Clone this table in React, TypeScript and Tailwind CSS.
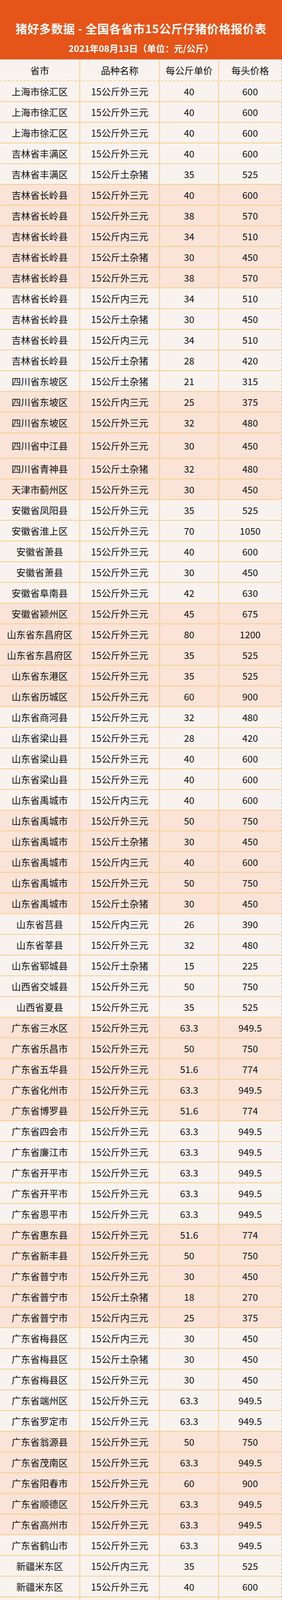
const ww = '15公斤外三元';
const nn = '15公斤内三元';
const tt = '15公斤土杂猪';

// 省市, 品种名称, 每公斤单价, 每头价格
const rows: [string, string, string, string][] = [
  ['上海市徐汇区', ww, '40', '600'],
  ['上海市徐汇区', ww, '40', '600'],
  ['上海市徐汇区', ww, '40', '600'],
  ['吉林省丰满区', ww, '40', '600'],
  ['吉林省丰满区', tt, '35', '525'],
  ['吉林省长岭县', ww, '40', '600'],
  ['吉林省长岭县', ww, '38', '570'],
  ['吉林省长岭县', nn, '34', '510'],
  ['吉林省长岭县', tt, '30', '450'],
  ['吉林省长岭县', ww, '38', '570'],
  ['吉林省长岭县', nn, '34', '510'],
  ['吉林省长岭县', tt, '30', '450'],
  ['吉林省长岭县', nn, '34', '510'],
  ['吉林省长岭县', tt, '28', '420'],
  ['四川省东坡区', tt, '21', '315'],
  ['四川省东坡区', nn, '25', '375'],
  ['四川省东坡区', ww, '32', '480'],
  ['四川省中江县', ww, '30', '450'],
  ['四川省青神县', tt, '32', '480'],
  ['天津市蓟州区', ww, '30', '450'],
  ['安徽省凤阳县', ww, '35', '525'],
  ['安徽省淮上区', ww, '70', '1050'],
  ['安徽省萧县', ww, '40', '600'],
  ['安徽省萧县', ww, '30', '450'],
  ['安徽省阜南县', ww, '42', '630'],
  ['安徽省颍州区', ww, '45', '675'],
  ['山东省东昌府区', ww, '80', '1200'],
  ['山东省东昌府区', ww, '35', '525'],
  ['山东省东港区', ww, '35', '525'],
  ['山东省历城区', ww, '60', '900'],
  ['山东省商河县', ww, '32', '480'],
  ['山东省梁山县', ww, '28', '420'],
  ['山东省梁山县', ww, '40', '600'],
  ['山东省梁山县', ww, '40', '600'],
  ['山东省禹城市', nn, '40', '600'],
  ['山东省禹城市', ww, '50', '750'],
  ['山东省禹城市', tt, '30', '450'],
  ['山东省禹城市', nn, '40', '600'],
  ['山东省禹城市', ww, '50', '750'],
  ['山东省禹城市', tt, '30', '450'],
  ['山东省莒县', nn, '26', '390'],
  ['山东省莘县', ww, '32', '480'],
  ['山东省郓城县', tt, '15', '225'],
  ['山西省交城县', ww, '50', '750'],
  ['山西省夏县', ww, '35', '525'],
  ['广东省三水区', ww, '63.3', '949.5'],
  ['广东省乐昌市', ww, '50', '750'],
  ['广东省五华县', ww, '51.6', '774'],
  ['广东省化州市', ww, '63.3', '949.5'],
  ['广东省博罗县', ww, '51.6', '774'],
  ['广东省四会市', ww, '63.3', '949.5'],
  ['广东省廉江市', ww, '63.3', '949.5'],
  ['广东省开平市', ww, '63.3', '949.5'],
  ['广东省开平市', ww, '63.3', '949.5'],
  ['广东省恩平市', ww, '63.3', '949.5'],
  ['广东省惠东县', ww, '51.6', '774'],
  ['广东省新丰县', ww, '50', '750'],
  ['广东省普宁市', ww, '30', '450'],
  ['广东省普宁市', tt, '18', '270'],
  ['广东省普宁市', nn, '25', '375'],
  ['广东省梅县区', nn, '30', '450'],
  ['广东省梅县区', tt, '30', '450'],
  ['广东省梅县区', ww, '30', '450'],
  ['广东省端州区', ww, '63.3', '949.5'],
  ['广东省罗定市', ww, '63.3', '949.5'],
  ['广东省翁源县', ww, '50', '750'],
  ['广东省茂南区', ww, '63.3', '949.5'],
  ['广东省阳春市', ww, '60', '900'],
  ['广东省顺德区', ww, '63.3', '949.5'],
  ['广东省高州市', ww, '63.3', '949.5'],
  ['广东省鹤山市', ww, '63.3', '949.5'],
  ['新疆米东区', nn, '35', '525'],
  ['新疆米东区', ww, '40', '600'],
  ['新疆米东区', tt, '30', '450'],
  ['江苏省东海县', tt, '40', '600'],
  ['江苏省东海县', nn, '45', '675'],
  ['江苏省东海县', ww, '50', '750'],
  ['江西省上犹县', ww, '35', '525'],
  ['河北省尚义县', ww, '35', '525'],
  ['河北省桥东区', tt, '35', '525'],
];

const font = { fontFamily: '"Noto Sans CJK SC", "Liberation Sans", sans-serif' };

export default function App() {
  return (
    <div className="w-[721px] bg-white pb-[6px]" style={font}>
      <div className="flex h-[152px] flex-col items-center bg-[#e55418] pt-[52px] text-white">
        <h1 className="text-[30px] leading-[40px] font-bold tracking-[0.5px]">猪好多数据 - 全国各省市15公斤仔猪价格报价表</h1>
        <p className="mt-[16px] text-[23px] leading-[30px] font-bold">2021年08月13日（单位：元/公斤）</p>
      </div>

      <div className="border-r-2 border-dashed border-r-[#c9c4c0]">
        <div className="grid h-[56px] grid-cols-[205px_204px_151px_1fr] overflow-hidden border-t border-b-2 border-dashed border-t-[#d8d2cc] border-b-[#f9cd86] bg-[#f8f3ef] text-[24px] leading-none text-[#111]">
          <div className="flex items-center justify-center border-r-2 border-[#f9cd86]">省市</div>
          <div className="flex items-center justify-center border-r-2 border-[#f9cd86]">品种名称</div>
          <div className="flex items-center justify-center border-r-2 border-[#f9cd86]">每公斤单价</div>
          <div className="flex items-center justify-center">每头价格</div>
        </div>

        {rows.map((r, i) => (
          <div
            key={i}
            className={`grid grid-cols-[205px_204px_151px_1fr] overflow-hidden border-b-2 border-[#f9cd86] text-[24px] leading-none text-[#111] ${
              r[0] === '四川省中江县' ? 'h-[65px]' : 'h-[53px]'
            } ${Math.floor(i / 5) % 2 === 0 ? 'bg-[#f8f3ef]' : 'bg-[#fae3d7]'}`}
          >
            <div className="flex items-center justify-center border-r-2 border-[#f9cd86]">{r[0]}</div>
            <div className="flex items-center justify-center border-r-2 border-[#f9cd86]">{r[1]}</div>
            <div className="flex items-center justify-center border-r-2 border-[#f9cd86]">{r[2]}</div>
            <div className="flex items-center justify-center">{r[3]}</div>
          </div>
        ))}
      </div>
    </div>
  );
}
